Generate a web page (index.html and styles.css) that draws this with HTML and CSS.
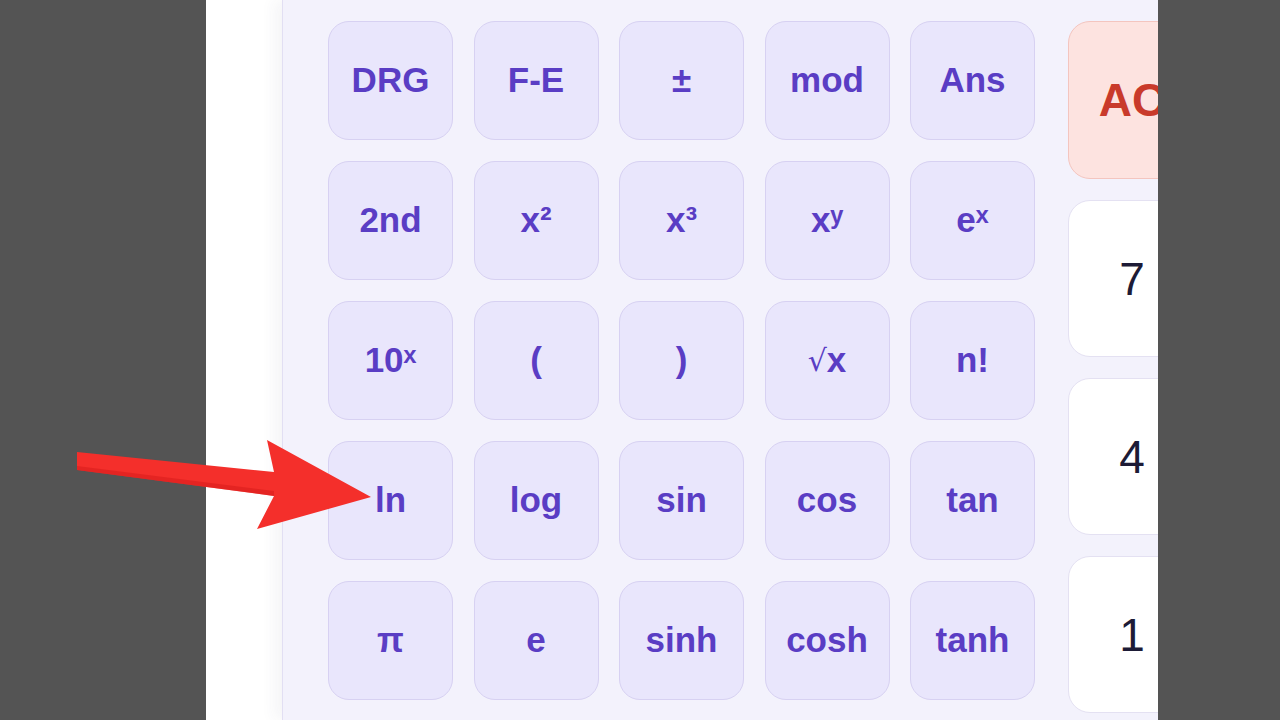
FILE: index.html
```html
<!DOCTYPE html>
<html>
<head>
<meta charset="utf-8">
<link rel="stylesheet" href="styles.css">
</head>
<body>
<div class="stage">
  <div class="strip"></div>
  <div class="panel">
    <div class="sci">
      <div class="key">DRG</div>
      <div class="key">F-E</div>
      <div class="key">±</div>
      <div class="key">mod</div>
      <div class="key">Ans</div>
      <div class="key">2nd</div>
      <div class="key">x²</div>
      <div class="key">x³</div>
      <div class="key">xʸ</div>
      <div class="key">eˣ</div>
      <div class="key">10ˣ</div>
      <div class="key">(</div>
      <div class="key">)</div>
      <div class="key"><span class="root">√</span>x</div>
      <div class="key">n!</div>
      <div class="key">ln</div>
      <div class="key">log</div>
      <div class="key">sin</div>
      <div class="key">cos</div>
      <div class="key">tan</div>
      <div class="key">π</div>
      <div class="key">e</div>
      <div class="key">sinh</div>
      <div class="key">cosh</div>
      <div class="key">tanh</div>
    </div>
    <div class="nums">
      <div class="nkey clear">AC</div>
      <div class="nkey">7</div>
      <div class="nkey">4</div>
      <div class="nkey">1</div>
    </div>
  </div>
</div>
<svg class="arrow" width="1280" height="720" viewBox="0 0 1280 720">
  <polygon points="77,452 274,472 267,440 371,497 257,529 274,496 77,470" fill="#f42f2b"/>
  <polygon points="274,496 77,470 77,466 274,491" fill="#d81e1c" opacity="0.6"/>
</svg>
</body>
</html>
```
FILE: styles.css
```css
html, body {
  margin: 0;
  padding: 0;
}
body {
  width: 1280px;
  height: 720px;
  background: #545454;
  overflow: hidden;
  position: relative;
  font-family: "Liberation Sans", Arial, sans-serif;
}
.stage {
  margin-left: 206px;
  width: 952px;
  height: 720px;
  background: #ffffff;
  overflow: hidden;
  display: flex;
}
.strip {
  flex: 0 0 76px;
  background: #ffffff;
}
.panel {
  flex: 0 0 auto;
  width: 1000px;
  background: #f3f2fc;
  border-left: 1.5px solid #e2dff3;
  box-shadow: -8px 0 14px rgba(60, 60, 90, 0.05);
  display: flex;
  align-items: flex-start;
  padding: 21px 0 0 45px;
  gap: 33px;
}
.sci {
  display: grid;
  grid-template-columns: repeat(5, 125px);
  grid-auto-rows: 119px;
  column-gap: 20.5px;
  row-gap: 21px;
}
.key {
  box-sizing: border-box;
  background: #e9e6fc;
  border: 1.5px solid #d7d1f2;
  border-radius: 21px;
  color: #5a3dc4;
  font-weight: bold;
  font-size: 35px;
  display: flex;
  align-items: center;
  justify-content: center;
  padding-bottom: 1px;
}
.root {
  font-weight: normal;
  font-family: "DejaVu Sans", sans-serif;
  font-size: 30px;
}
.nums {
  display: flex;
  flex-direction: column;
  gap: 21px;
  width: 128px;
}
.nkey {
  box-sizing: border-box;
  height: 157px;
  background: #ffffff;
  border: 1.5px solid #e4e1f2;
  border-radius: 22px;
  color: #1d1b36;
  font-size: 46px;
  display: flex;
  align-items: center;
  justify-content: center;
}
.nkey.clear {
  height: 158px;
  background: #fde3e0;
  border-color: #f4c5bf;
  color: #c93a2b;
  font-weight: bold;
}
.arrow {
  position: absolute;
  left: 0;
  top: 0;
  pointer-events: none;
}
```
